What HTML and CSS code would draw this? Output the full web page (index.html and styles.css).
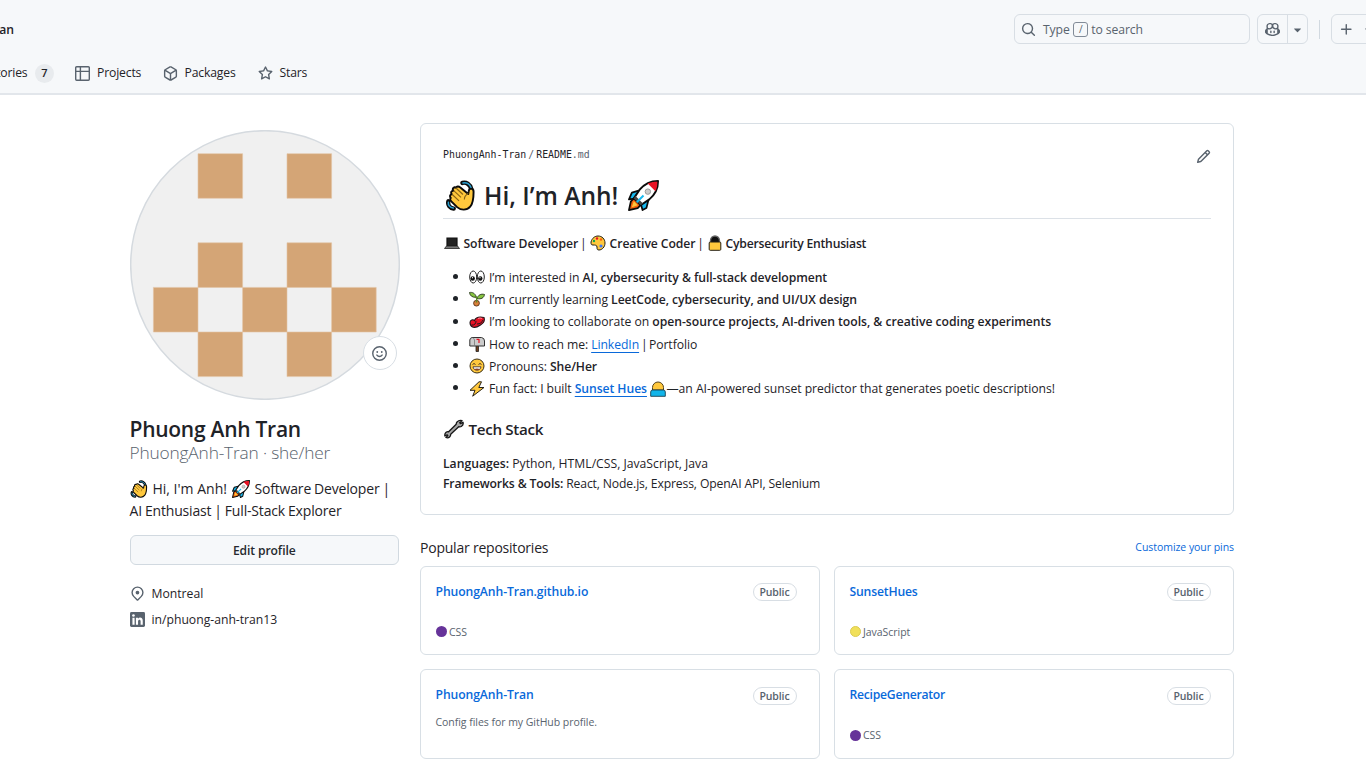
FILE: index.html
```html
<!DOCTYPE html>
<html lang="en">
<head>
<meta charset="utf-8">
<title>PhuongAnh-Tran (Phuong Anh Tran)</title>
<link rel="stylesheet" href="styles.css">
</head>
<body>
<svg class="sprite" aria-hidden="true">
  <symbol id="wave" viewBox="0 0 32 32">
    <path d="M18 3c4-1 8 1.500 9 6M3.500 22c-1 4 1.500 7 5.500 7.500" fill="none" stroke="#0b0b0b" stroke-width="4.500" stroke-linecap="round"/>
    <path d="M18.500 3c3.500-.5 7 1.500 8.500 5M3.500 23c-.5 3 1.500 5.500 5 6" fill="none" stroke="#2a9fd0" stroke-width="1.600" stroke-linecap="round"/>
    <path d="M10 7.500c-2 .5-2.500 2-1.500 3.500-2 0-3 2-1.500 3.700-2 .3-2.500 2.300-1 3.800-1 1-.8 2.500.5 3.500l6 6c4 3.500 10 3.500 13.500-.5C29 24 29.500 20 29.500 12c0-4-4.500-4-5-.5l-.5 3-8.500-7c-1.500-1.300-3.500-1-4 .5z" fill="#ffc83d" stroke="#0b0b0b" stroke-width="2" stroke-linejoin="round"/>
    <path d="m9 11 7.500 7M7.500 15l7 6.500M11 8l7.500 7M24 14c-2 1-4 3-4 6" fill="none" stroke="#8a6414" stroke-width="1.200"/>
  </symbol>
  <symbol id="rocket" viewBox="0 0 32 32">
    <path d="m11 11-7 2-3 7 8-1zM21 21l-2 8-4 2-2-7z" fill="#18b8ee" stroke="#0b0b0b" stroke-width="1.800" stroke-linejoin="round"/>
    <path d="m6 19-3 3-2 9 9-2 4-4z" fill="#f7630c" stroke="#0b0b0b" stroke-width="1.800" stroke-linejoin="round"/>
    <path d="m4 28 2-6 4 4z" fill="#ffc83d"/>
    <path d="M31 1c-9 0-14 3-19 9l-6 9 7 7 9-6c6-5 9-10 9-19z" fill="#fff" stroke="#0b0b0b" stroke-width="2" stroke-linejoin="round"/>
    <path d="M30.300 1.700c-4 0-7 .6-10 2l8 8c1.400-3 2-6 2-10z" fill="#e81224"/>
    <path d="m6 19 7 7 2.500-1.700-8-8z" fill="#444"/>
    <circle cx="20.500" cy="12" r="2.800" fill="#ccc" stroke="#999"/>
    <path d="m16 16-7 7" stroke="#18b8ee" stroke-width="2"/>
  </symbol>
  <symbol id="laptop" viewBox="0 0 16 16">
    <path d="M3 3h10v8H3z" fill="#222" stroke="#111" stroke-width="1.200"/>
    <path d="M2.500 11h11l2 2.500H.500z" fill="#777" stroke="#222" stroke-width=".8"/>
  </symbol>
  <symbol id="palette" viewBox="0 0 16 16">
    <path d="M8 1c4 0 7 3 7 7s-3 7-6 7c-2 0-2-1-2-3S5 10 3 10 1 9 1 7c1-4 4-6 7-6z" fill="#ffc83d" stroke="#252015" stroke-width="1"/>
    <circle cx="4" cy="6" r="1.200" fill="#16a34a"/><circle cx="7" cy="3.500" r="1.200" fill="#e81224"/><circle cx="11" cy="4.500" r="1.200" fill="#f7630c"/><circle cx="11" cy="11" r="1.600" fill="#3b78ff"/>
  </symbol>
  <symbol id="lock" viewBox="0 0 16 16">
    <path d="M3.500 8V5.500a4.500 4.500 0 0 1 9 0V8z" fill="#111" stroke="#666" stroke-width="1.300"/>
    <rect x="2.200" y="7" width="11.600" height="8.300" rx="1" fill="#ffc83d" stroke="#252015"/>
  </symbol>
  <symbol id="eyes" viewBox="0 0 16 16">
    <g fill="#fff" stroke="#222"><ellipse cx="4.200" cy="8" rx="3.500" ry="6"/><ellipse cx="11.800" cy="8" rx="3.500" ry="6"/></g>
    <circle cx="3.700" cy="9.500" r="2.200" fill="#111"/><circle cx="11.300" cy="9.500" r="2.200" fill="#111"/>
    <circle cx="3.500" cy="8.700" r=".6" fill="#fff"/><circle cx="11" cy="8.700" r=".6" fill="#fff"/>
  </symbol>
  <symbol id="seedling" viewBox="0 0 16 16">
    <path d="M7 5.500C6 2 3 1 .500 1.500 1 5 3.500 6.500 7 6.300zM8 7.500c1-3.500 4-5 7.500-4C15 7 12 8.500 8 7.500z" fill="#86c440" stroke="#26371a" stroke-width=".9"/>
    <circle cx="7.500" cy="12.200" r="2.900" fill="#d9803a" stroke="#4a2a16" stroke-width=".8"/>
    <path d="M7 5q1 2 .5 6.500" fill="none" stroke="#5b8a24" stroke-width="1.400"/>
  </symbol>
  <symbol id="hearts" viewBox="0 0 16 16">
    <path d="M1 8.500c0-2.500 3-3.500 4.500-2C7 3 10.500 2.500 15 3.500c1 3 0 5.500-3.500 7.500-3 2-6 3-8 2-2-1-2.500-2.500-2.500-4.500z" fill="#e81224" stroke="#20181c" stroke-width="1.100"/>
    <path d="M2.500 11c3 .5 4.500-1.500 4.500-4M8 10c3 0 5-1.500 6-4" fill="none" stroke="#20181c"/>
    <path d="M9 4.500q2-1 4 0" fill="none" stroke="#ff8090"/>
  </symbol>
  <symbol id="mailbox" viewBox="0 0 16 16">
    <path d="M7 9h2.500v6.500H7z" fill="#704020" stroke="#222" stroke-width=".8"/>
    <path d="M3 1.500h9.500Q15.500 2 15.500 5v5H.800V4Q1 2 3 1.500z" fill="#ccc" stroke="#333"/>
    <path d="M5.500 10V4Q5 2 3.500 1.700" fill="none" stroke="#777" stroke-width=".8"/>
    <path d="M10 3v4M7.500 3.300H10" stroke="#e81224" stroke-width="1.200"/>
  </symbol>
  <symbol id="grin" viewBox="0 0 16 16">
    <circle cx="8" cy="8" r="7" fill="#ffc83d" stroke="#3b3016"/>
    <path d="m3.500 6.500 1.500-1 1.500 1m3 0 1.500-1 1.500 1" fill="none" stroke="#322" stroke-width=".9"/>
    <path d="M4 8.800h8c-.5 4.500-7.500 4.500-8 0z" fill="#fff" stroke="#322" stroke-width=".8"/>
    <path d="M5 11q3-1 6 0-3 2.400-6 0z" fill="#8a3f20"/>
  </symbol>
  <symbol id="bolt" viewBox="0 0 16 16">
    <path d="M10 .800 1 9.300h5l-2.300 5.900L15 6.500h-5.200l2.700-5.700z" fill="#ffc83d" stroke="#27221a" stroke-width="1" stroke-linejoin="round"/>
  </symbol>
  <symbol id="sunset" viewBox="0 0 16 16">
    <path d="M2.500 9V6.500a5.500 5.500 0 0 1 11 0V9z" fill="#ffc83d" stroke="#54431d" stroke-width="1"/>
    <path d="M.700 15.300V11q0-2 2-2h10.600q2 0 2 2v4.300z" fill="#12b5ea" stroke="#174050" stroke-width=".9"/>
  </symbol>
  <symbol id="wrench" viewBox="0 0 20 20">
    <path d="M13 3c1.500-1.500 3.500-2 5-1.300l-2.300 2 .7.900 2.600-1.300c.5 1.700-.3 3.400-1.700 4.200-.9.500-1.800.4-2.600.2L6.700 15.200c.1 1.300-.4 2.100-1.100 2.700-1 .9-2.400 1.100-3.700.6l1.900-1.900-.7-.8-2.200 1.200c-.3-1.500.2-2.900 1.200-3.700.9-.6 1.600-.7 2.500-.5L12.200 5.300c0-.9.200-1.700.8-2.300z" fill="#a5a5a5" stroke="#151515" stroke-width="1.300" stroke-linejoin="round"/>
  </symbol>
</svg>

<header class="header">
  <div class="topbar">
    <div class="crumb"><span>ran</span></div>
    <div class="search">
      <svg class="ic" width="15" height="15" viewBox="0 0 16 16"><path d="M10.680 11.740a6 6 0 0 1-7.922-8.982 6 6 0 0 1 8.982 7.922l3.040 3.040a.749.749 0 0 1-.326 1.275.749.749 0 0 1-.734-.215ZM11.500 7a4.499 4.499 0 1 0-8.997 0A4.499 4.499 0 0 0 11.500 7Z"/></svg>
      <span>Type</span><kbd>/</kbd><span>to search</span>
    </div>
    <div class="btns copilot">
      <span class="b1"><svg class="ic" width="15" height="15" viewBox="0 0 16 16"><path d="M7.998 15.035c-4.562 0-7.873-2.914-7.998-3.749V9.338c.085-.628.677-1.686 1.588-2.065.013-.07.024-.143.036-.218.029-.183.06-.384.126-.612-.201-.508-.254-1.084-.254-1.656 0-.87.128-1.769.693-2.484.579-.733 1.494-1.124 2.724-1.261 1.206-.134 2.262.034 2.944.765.05.053.096.108.139.165.044-.057.094-.112.143-.165.682-.731 1.738-.899 2.944-.765 1.230.137 2.145.528 2.724 1.261.566.715.693 1.614.693 2.484 0 .572-.053 1.148-.254 1.656.066.228.098.429.126.612.012.076.024.148.037.218.924.385 1.522 1.471 1.591 2.095v1.872c0 .766-3.351 3.795-8.002 3.795Zm0-1.485c2.280 0 4.584-1.110 5.002-1.433V7.862l-.023-.116c-.49.21-1.075.291-1.727.291-1.146 0-2.059-.327-2.710-.991A3.222 3.222 0 0 1 8 6.303a3.240 3.240 0 0 1-.544.743c-.65.664-1.563.991-2.710.991-.652 0-1.236-.081-1.727-.291l-.023.116v4.255c.419.323 2.722 1.433 5.002 1.433ZM6.762 2.830c-.193-.206-.637-.413-1.682-.297-1.019.113-1.479.404-1.713.7-.247.312-.369.789-.369 1.554 0 .793.129 1.171.308 1.371.162.181.519.379 1.442.379.853 0 1.339-.235 1.638-.54.315-.322.527-.827.617-1.553.117-.935-.037-1.395-.241-1.614Zm4.155-.297c-1.044-.116-1.488.091-1.681.297-.204.219-.359.679-.242 1.614.091.726.303 1.231.618 1.553.299.305.784.54 1.638.54.922 0 1.280-.198 1.442-.379.179-.2.308-.578.308-1.371 0-.765-.123-1.242-.37-1.554-.233-.296-.693-.587-1.713-.7Z"/><path d="M6.250 9.037a.75.75 0 0 1 .75.75v1.501a.75.75 0 0 1-1.500 0V9.787a.75.75 0 0 1 .75-.75Zm4.250.75v1.501a.75.75 0 0 1-1.500 0V9.787a.75.75 0 0 1 1.500 0Z"/></svg></span>
      <span class="b2"><svg class="ic" width="15" height="15" viewBox="0 0 16 16"><path d="m4.427 7.427 3.396 3.396a.25.25 0 0 0 .354 0l3.396-3.396A.25.25 0 0 0 11.396 7H4.604a.25.25 0 0 0-.177.427Z"/></svg></span>
    </div>
    <i class="sep"></i>
    <div class="btns create">
      <svg class="ic" width="15" height="15" viewBox="0 0 16 16"><path d="M7.750 2a.75.75 0 0 1 .75.75V7h4.250a.75.75 0 0 1 0 1.500H8.500v4.250a.75.75 0 0 1-1.500 0V8.500H2.750a.75.75 0 0 1 0-1.500H7V2.750A.75.75 0 0 1 7.750 2Z"/></svg>
      <svg class="ic" width="15" height="15" viewBox="0 0 16 16"><path d="m4.427 7.427 3.396 3.396a.25.25 0 0 0 .354 0l3.396-3.396A.25.25 0 0 0 11.396 7H4.604a.25.25 0 0 0-.177.427Z"/></svg>
    </div>
  </div>
  <nav class="tabs">
    <a class="tab repos"><span>tories</span></a><b class="count">7</b>
    <a class="tab t1"><svg class="ic" width="15" height="15" viewBox="0 0 16 16"><path d="M0 1.750C0 .784.784 0 1.750 0h12.500C15.216 0 16 .784 16 1.750v12.500A1.750 1.750 0 0 1 14.250 16H1.750A1.750 1.750 0 0 1 0 14.250ZM6.500 6.500v8h7.750a.25.25 0 0 0 .25-.25V6.500Zm8-1.500V1.750a.25.25 0 0 0-.25-.25H6.500V5Zm-13 1.500v7.750c0 .138.112.25.25.25H5v-8ZM5 5V1.500H1.750a.25.25 0 0 0-.25.25V5Z"/></svg><span>Projects</span></a>
    <a class="tab t2"><svg class="ic" width="15" height="15" viewBox="0 0 16 16"><path d="m8.878.392 5.250 3.045c.54.314.872.89.872 1.514v6.098a1.750 1.750 0 0 1-.872 1.514l-5.250 3.045a1.750 1.750 0 0 1-1.756 0l-5.250-3.045A1.750 1.750 0 0 1 1 11.049V4.951c0-.624.332-1.201.872-1.514L7.122.392a1.750 1.750 0 0 1 1.756 0ZM7.875 1.690l-4.630 2.685L8 7.133l4.755-2.758-4.630-2.685a.248.248 0 0 0-.25 0ZM2.500 5.677v5.372c0 .09.047.171.125.216l4.625 2.683V8.432Zm6.250 8.271 4.625-2.683a.25.25 0 0 0 .125-.216V5.677L8.750 8.432Z"/></svg><span>Packages</span></a>
    <a class="tab t3"><svg class="ic" width="15" height="15" viewBox="0 0 16 16"><path d="M8 .25a.75.75 0 0 1 .673.418l1.882 3.815 4.210.612a.75.75 0 0 1 .416 1.279l-3.046 2.970.719 4.192a.751.751 0 0 1-1.088.791L8 12.347l-3.766 1.980a.75.75 0 0 1-1.088-.79l.72-4.194L.818 6.374a.75.75 0 0 1 .416-1.280l4.210-.611L7.327.668A.75.75 0 0 1 8 .25Zm0 2.445L6.615 5.500a.75.75 0 0 1-.564.41l-3.097.45 2.240 2.184a.75.75 0 0 1 .216.664l-.528 3.084 2.769-1.456a.75.75 0 0 1 .698 0l2.770 1.456-.53-3.084a.75.75 0 0 1 .216-.664l2.240-2.183-3.096-.45a.75.75 0 0 1-.564-.41L8 2.694Z"/></svg><span>Stars</span></a>
  </nav>
</header>

<main class="page">
  <aside class="side">
    <div class="avatar">
      <svg width="270" height="270" viewBox="0 0 270 270">
        <circle cx="135" cy="135" r="134.300" fill="#f0f0f0" stroke="#d5dadf" stroke-width="1.500"/>
        <g fill="#d4a576" stroke="#e3c5a6" stroke-width=".6">
          <path d="M68 23.700h44.600v44.600H68zM157 23.700h44.600v44.600H157zM68 112.800h44.600v44.600H68zM157 112.800h44.600v44.600H157zM23.400 157.400H68V202H23.400zM112.600 157.400H157V202h-44.400zM201.600 157.400h44.600V202h-44.600zM68 202h44.600v44.600H68zM157 202h44.600v44.600H157z"/>
        </g>
      </svg>
      <span class="status"><svg width="15" height="15" viewBox="0 0 16 16" fill="none" stroke="#59636e" stroke-width="1.500" stroke-linecap="round"><circle cx="8" cy="8" r="7.200"/><path d="M5.200 9.700c1.500 2 4.100 2 5.600 0"/><path d="M5.600 6.200v.3M10.400 6.200v.3" stroke-width="1.900"/></svg></span>
    </div>
    <h1 class="name">Phuong Anh Tran</h1>
    <p class="login">PhuongAnh-Tran · she/her</p>
    <div class="bio">
      <p><svg class="e18"><use href="#wave"/></svg><span>Hi, I'm Anh!</span><svg class="e18"><use href="#rocket"/></svg><span class="tight">Software Developer |</span></p>
      <p><span class="tight">AI Enthusiast | Full-Stack Explorer</span></p>
    </div>
    <button class="edit">Edit profile</button>
    <ul class="facts">
      <li><svg class="ic" width="15" height="15" viewBox="0 0 16 16"><path d="m12.596 11.596-3.535 3.536a1.500 1.500 0 0 1-2.122 0l-3.535-3.536a6.500 6.500 0 1 1 9.192-9.193 6.500 6.500 0 0 1 0 9.193Zm-1.060-8.132v-.001a5 5 0 1 0-7.072 7.072L8 14.070l3.536-3.534a5 5 0 0 0 0-7.072ZM8 9a2 2 0 1 1-.001-3.999A2 2 0 0 1 8 9Z"/></svg><span>Montreal</span></li>
      <li><svg width="15" height="15" viewBox="0 0 16 16"><rect width="16" height="16" rx="1.500" fill="#59636e"/><circle cx="3.700" cy="3.700" r="1.400" fill="#fff"/><path d="M2.600 6.200h2.300v7.400H2.600zM6.300 6.200h2.200v1c1.600-2.200 5.100-1.500 5.100 2.100v4.300h-2.300V9.800c0-2.300-2.700-2.100-2.700 0v3.800H6.300z" fill="#fff"/></svg><span>in/phuong-anh-tran13</span></li>
    </ul>
  </aside>

  <section class="content">
    <article class="readme">
      <div class="path"><span>PhuongAnh-Tran<span class="slash">/</span>README<span class="ext">.md</span></span>
        <svg class="ic" width="15" height="15" viewBox="0 0 16 16"><path d="M11.013 1.427a1.750 1.750 0 0 1 2.474 0l1.086 1.086a1.750 1.750 0 0 1 0 2.474l-8.610 8.610c-.21.21-.47.364-.756.445l-3.251.93a.75.75 0 0 1-.927-.928l.929-3.250c.081-.286.235-.547.445-.758l8.610-8.610Zm.176 4.823L9.750 4.810l-6.286 6.287a.253.253 0 0 0-.064.108l-.558 1.953 1.953-.558a.253.253 0 0 0 .108-.064Zm1.238-3.763a.25.25 0 0 0-.354 0L10.811 3.750l1.439 1.440 1.263-1.263a.25.25 0 0 0 0-.354Z"/></svg>
      </div>
      <h2 class="hello"><svg class="e32"><use href="#wave"/></svg><span>Hi, I’m Anh!</span><svg class="e32"><use href="#rocket"/></svg></h2>
      <p class="roles"><svg class="e16"><use href="#laptop"/></svg><span>Software Developer<span class="bar"> |</span></span><svg class="e16"><use href="#palette"/></svg><span>Creative Coder<span class="bar"> |</span></span><svg class="e16"><use href="#lock"/></svg><span>Cybersecurity Enthusiast</span></p>
      <ul class="about">
        <li><svg class="e16"><use href="#eyes"/></svg><span>I’m interested in <strong>AI, cybersecurity &amp; full-stack development</strong></span></li>
        <li><svg class="e16"><use href="#seedling"/></svg><span>I’m currently learning <strong>LeetCode, cybersecurity, and UI/UX design</strong></span></li>
        <li class="wide"><svg class="e16"><use href="#hearts"/></svg><span>I’m looking to collaborate on <strong>open-source projects, AI-driven tools, &amp; creative coding experiments</strong></span></li>
        <li><svg class="e16"><use href="#mailbox"/></svg><span>How to reach me: <a>LinkedIn</a><span class="bar"> | </span>Portfolio</span></li>
        <li><svg class="e16"><use href="#grin"/></svg><span>Pronouns: <strong>She/Her</strong></span></li>
        <li><svg class="e16"><use href="#bolt"/></svg><span>Fun fact: I built <a><strong>Sunset Hues</strong></a></span><svg class="e16 sun"><use href="#sunset"/></svg><span class="tail">—an AI-powered sunset predictor that generates poetic descriptions!</span></li>
      </ul>
      <h3 class="tech"><svg class="e20"><use href="#wrench"/></svg><span>Tech Stack</span></h3>
      <p class="stack"><span><strong>Languages:</strong> Python, HTML/CSS, JavaScript, Java</span><br><span class="tools"><strong>Frameworks &amp; Tools:</strong> React, Node.js, Express, OpenAI API, Selenium</span></p>
    </article>

    <div class="pinhead"><h2>Popular repositories</h2><a>Customize your pins</a></div>
    <div class="pins">
      <div class="pin"><div class="row"><a>PhuongAnh-Tran.github.io</a><span class="pill">Public</span></div><p class="lang"><i class="dot css"></i><span>CSS</span></p></div>
      <div class="pin"><div class="row"><a class="tight">SunsetHues</a><span class="pill">Public</span></div><p class="lang"><i class="dot js"></i><span>JavaScript</span></p></div>
      <div class="pin"><div class="row"><a>PhuongAnh-Tran</a><span class="pill">Public</span></div><p class="desc">Config files for my GitHub profile.</p></div>
      <div class="pin"><div class="row"><a class="tighter">RecipeGenerator</a><span class="pill">Public</span></div><p class="lang"><i class="dot css"></i><span>CSS</span></p></div>
    </div>
  </section>
</main>
</body>
</html>
```
FILE: styles.css
```css
* { box-sizing: border-box; }
body {
  margin: 0;
  width: 1366px;
  height: 768px;
  overflow: hidden;
  background: #fff;
  color: #1f2328;
  font-family: "Open Sans", "Noto Sans", sans-serif;
  font-size: 12.2px;
  white-space: nowrap;
}
h1, h2, h3, p, ul { margin: 0; padding: 0; list-style: none; }
strong { font-weight: 600; }
svg { display: block; flex: none; }
.sprite { position: absolute; width: 0; height: 0; }
.ic { fill: #59636e; }
.e16 { width: 16px; height: 16px; }
.e18 { width: 18px; height: 18px; }
.e20 { width: 20px; height: 20px; }
.e32 { width: 31px; height: 31px; }

.header {
  height: 95px;
  background: #f6f8fa;
  border-bottom: 2px solid #e2e6eb;
}
.topbar { display: flex; align-items: center; width: 1366px; height: 58px; overflow: hidden; }
.topbar > * { flex: none; }
.crumb {
  display: flex;
  justify-content: flex-end;
  width: 14px;
  margin-right: 1000px;
  overflow: hidden;
  font-weight: 600;
}
.search {
  display: flex;
  align-items: center;
  width: 236px;
  height: 30px;
  padding-left: 6px;
  border: 1px solid #d8dee4;
  border-radius: 6px;
  color: #59636e;
  letter-spacing: -.1px;
}
.search .ic { margin-right: 7px; }
.search kbd {
  width: 15px;
  height: 15px;
  margin: 0 3px 0 3.5px;
  border: 1px solid #818b98;
  border-radius: 3px;
  font: 10px/13px "Open Sans", sans-serif;
  text-align: center;
}
.btns {
  display: flex;
  align-items: center;
  height: 30px;
  border: 1px solid #d8dee4;
  border-radius: 6px;
}
.copilot { width: 51px; margin-left: 7px; }
.b1, .b2 { display: flex; align-items: center; justify-content: center; height: 28px; }
.b1 { width: 30px; border-right: 1px solid #d8dee4; }
.b2 { width: 19px; }
.sep { width: 1px; height: 19px; margin: 0 11px; background: #d1d9e0; }
.create { width: 60px; padding-left: 7px; gap: 7px; }

.tabs { display: flex; align-items: center; height: 30px; }
.tab { display: flex; align-items: center; gap: 7px; letter-spacing: -.17px; }
.tab span { margin-top: -1px; }
.repos { justify-content: flex-end; width: 27.5px; overflow: hidden; }
.count {
  width: 19px;
  height: 19px;
  margin: 0 21px 0 7.5px;
  border-radius: 10px;
  background: #e8ebee;
  font-size: 11px;
  font-weight: 600;
  line-height: 18px;
  text-align: center;
}
.t1 { width: 87.5px; }
.t2 { width: 95px; }

.page { display: flex; gap: 21px; padding: 28px 132px 0 129.5px; }
.side { width: 269.5px; padding-top: 6.5px; }
.avatar { position: relative; width: 270px; height: 270px; }
.avatar > svg { margin-left: .1px; }
.status {
  position: absolute;
  left: 233px;
  top: 206.5px;
  display: flex;
  align-items: center;
  justify-content: center;
  width: 34px;
  height: 34px;
  border: 1px solid #d8dee4;
  border-radius: 50%;
  background: #fff;
}
.name { height: 24px; margin-top: 17.5px; font-size: 21px; font-weight: 600; line-height: 24px; letter-spacing: -.26px; }
.login { height: 24px; font-size: 17.3px; font-weight: 300; line-height: 24px; color: #59636e; letter-spacing: -.16px; }
.bio { margin-top: 13px; font-size: 14px; line-height: 22px; }
.bio p { display: flex; align-items: center; height: 22px; }
.bio .e18 { margin-left: .5px; }
.bio .e18 + span { margin: 0 4.5px; }
.bio .tight { letter-spacing: -.17px; word-spacing: -.5px; }
.edit {
  display: block;
  width: 269.5px;
  height: 30px;
  margin-top: 13px;
  padding: 0;
  border: 1px solid #d1d9e0;
  border-radius: 6px;
  background: #f6f8fa;
  color: #25292e;
  font: 600 12.1px/29px "Open Sans", sans-serif;
  letter-spacing: -.1px;
}
.facts { margin-top: 15px; letter-spacing: -.01px; }
.facts li { display: flex; align-items: center; gap: 7px; height: 26.5px; }

.content { width: 814px; }
.readme {
  height: 392px;
  padding: 22px 22px 0;
  border: 1px solid #d8dfe5;
  border-radius: 6px;
}
.path { display: flex; justify-content: space-between; height: 18px; font: 9.88px/18px "DejaVu Sans Mono", monospace; }
.path .ic { margin: 3px 0 0; }
.slash { margin: 0 2px; color: #59636e; }
.ext { color: #59636e; }
.hello {
  display: flex;
  align-items: center;
  gap: 8.5px;
  height: 55px;
  padding: 9px 0 0 1.5px;
  border-bottom: 1px solid #dce1e7;
  font-size: 24.5px;
  font-weight: 600;
}
.hello .e32:last-child { margin-left: 1px; }
.roles {
  display: flex;
  align-items: center;
  gap: 4px;
  height: 20px;
  margin-top: 14px;
  font-weight: 600;
  letter-spacing: -.08px;
}
.roles .e16 { margin-left: .5px; }
.roles .e16 ~ .e16 { margin-left: -.5px; }
.roles span + .e16 + span:last-child { margin-left: -1.5px; letter-spacing: -.22px; }
.tight { letter-spacing: -.17px; }
.tighter { letter-spacing: -.26px; }
.about { margin-top: 13px; padding-left: 26px; letter-spacing: -.07px; }
.about li { position: relative; display: flex; align-items: center; height: 22.3px; }
.about .wide { letter-spacing: -.03px; }
.about li::before {
  content: "";
  position: absolute;
  left: -16px;
  top: 8px;
  width: 5px;
  height: 5px;
  border-radius: 50%;
  background: #1f2328;
}
.about .e16 { margin-right: 4px; }
.about .sun { margin: 0 0 0 3.5px; }
.about .tail { letter-spacing: -.04px; }
.about a { color: #0969da; text-decoration: underline; text-underline-offset: 2.5px; }
.bar { word-spacing: -.7px; letter-spacing: -.6px; font-weight: 400; }
.tech { display: flex; align-items: center; gap: 5px; height: 24px; margin-top: 17.5px; padding-left: .5px; font-size: 15.2px; font-weight: 600; letter-spacing: -.33px; }
.stack { margin-top: 13px; line-height: 19.4px; }
.tools { letter-spacing: -.14px; }

.pinhead { display: flex; align-items: center; justify-content: space-between; height: 22px; margin-top: 21.5px; }
.pinhead h2 { font-size: 14px; font-weight: 400; letter-spacing: -.22px; }
.pinhead a { margin-top: -1px; color: #0969da; font-size: 10.5px; letter-spacing: -.05px; }
.pins { display: grid; grid-template-columns: 399.5px 399.5px; gap: 14px 14.5px; margin-top: 7px; }
.pin {
  height: 89.5px;
  padding: 15px 22px 0 14.5px;
  border: 1px solid #d8dfe5;
  border-radius: 6px;
}
.row { display: flex; justify-content: space-between; height: 20px; line-height: 19px; letter-spacing: -.09px; }
.row a { color: #0969da; font-weight: 600; }
.pill {
  width: 44px;
  height: 18px;
  margin-top: 1.7px;
  border: 1px solid #d8dee4;
  border-radius: 9px;
  color: #59636e;
  font-size: 10.5px;
  font-weight: 600;
  line-height: 17px;
  text-align: center;
}
.lang, .desc { display: flex; align-items: center; height: 18px; color: #59636e; font-size: 10.5px; letter-spacing: -.04px; }
.lang { gap: 2.5px; margin-top: 21px; }
.desc { margin-top: 7.5px; }
.dot { width: 11px; height: 11px; border-radius: 50%; }
.css { background: #663399; }
.js { border: 1px solid #dccb50; background: #f1e05a; }
```
